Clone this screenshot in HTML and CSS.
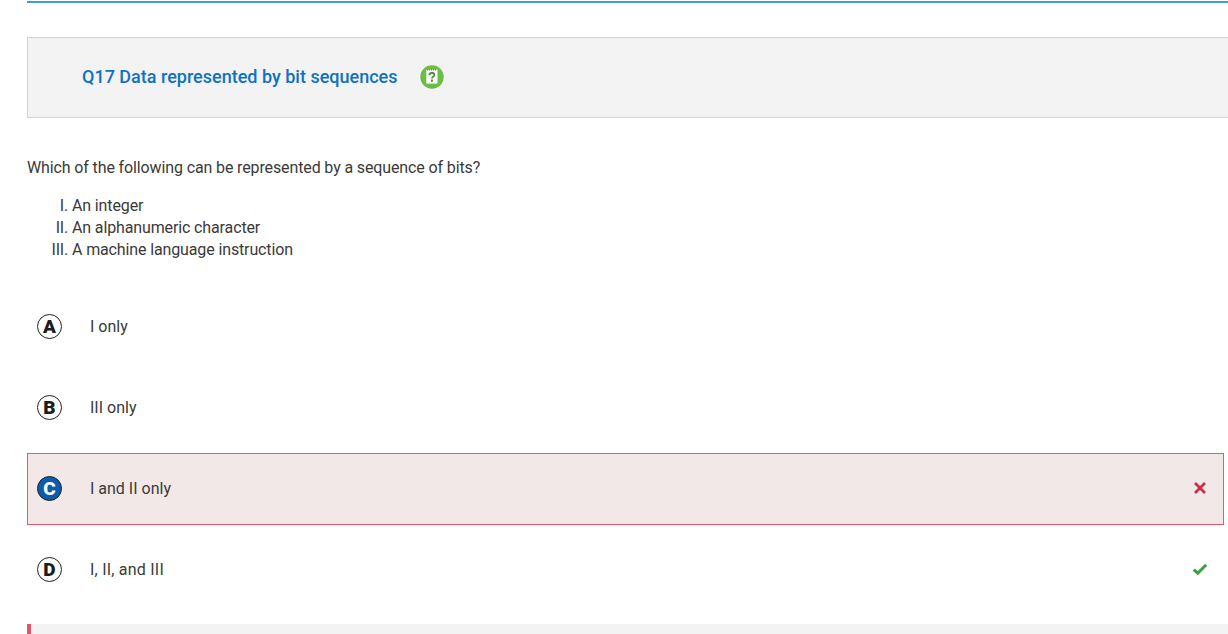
FILE: index.html
```html
<!DOCTYPE html>
<html lang="en">
<head>
<meta charset="utf-8">
<title>Q17</title>
<link rel="stylesheet" href="styles.css">
</head>
<body>
<main class="page">
  <div class="rule"></div>
  <header class="qhead">
    <h1 class="qtitle">Q17 Data represented by bit sequences</h1>
    <svg class="qicon" width="24" height="24" viewBox="0 0 24 24" aria-hidden="true">
      <circle cx="12" cy="12" r="11.7" fill="#6cbd45"/>
      <rect x="6.3" y="4.6" width="11.2" height="14" fill="#fff"/>
      <path d="M7.5 3.8v1.8M9.5 3.8v1.8M11.5 3.8v1.8M13.5 3.8v1.8M15.5 3.8v1.8" stroke="#3f8f2a" stroke-width=".8"/>
      <path d="M9.4 10.2c0-3.2 5-3.2 5-.2 0 1.8-2.5 1.9-2.5 3.5" fill="none" stroke="#3f8f2a" stroke-width="1.8"/>
      <rect x="10.9" y="14.6" width="2" height="2.1" fill="#3f8f2a"/>
    </svg>
  </header>
  <p class="stem">Which of the following can be represented by a sequence of bits?</p>
  <ol class="roman">
    <li>An integer</li>
    <li>An alphanumeric character</li>
    <li>A machine language instruction</li>
  </ol>
  <div class="choices">
    <div class="choice"><span class="letter">A</span><span class="label">I only</span></div>
    <div class="choice"><span class="letter">B</span><span class="label">III only</span></div>
    <div class="choice wrong"><span class="letter">C</span><span class="label">I and II only</span>
      <svg class="mark" width="14" height="14" viewBox="0 0 14 14" aria-hidden="true"><path d="M2 2l10 10M12 2L2 12" stroke="#c9314a" stroke-width="2.8" fill="none"/></svg>
    </div>
    <div class="choice"><span class="letter">D</span><span class="label wide">I, II, and III</span>
      <svg class="mark" width="14" height="14" viewBox="0 0 14 14" aria-hidden="true"><path d="M.8 7.6l4 3.6 8.4-8.4" stroke="#3c9f45" stroke-width="3" fill="none"/></svg>
    </div>
  </div>
  <div class="feedback"></div>
</main>
</body>
</html>
```
FILE: styles.css
```css
html, body { margin: 0; padding: 0; background: #fff; overflow: hidden; height: 634px; }
body { font-family: Roboto, "Liberation Sans", sans-serif; font-size: 16px; color: #3a3a3a; }
.page { padding: 1px 0 0 27px; }
.rule { height: 2px; background: #3d9bd9; }
.qhead {
  margin-top: 34px; height: 79px; box-sizing: content-box; display: flex; align-items: center; gap: 23px;
  padding-left: 54px; background: #f3f3f3;
  border: 1px solid #d2d2d2; border-right: 0;
}
.qtitle { margin: 0 0 2px; font-size: 18px; font-weight: 500; line-height: 24px; color: #0f72c0; }
.qicon { display: block; margin-bottom: 2px; }
.stem { margin: 39px 0 0; line-height: 22px; letter-spacing: -0.125px; }
.roman { margin: 16px 0 0; padding-left: 45px; list-style: upper-roman; line-height: 22px; letter-spacing: -0.13px; }
.choices { margin-top: 30px; width: 1197px; display: flex; flex-direction: column; gap: 10px; }
.choice {
  box-sizing: border-box; height: 71px; display: flex; align-items: center;
  padding-left: 9px; border: 1px solid transparent;
}
.letter {
  box-sizing: border-box; width: 25px; height: 25px; flex: none; border-radius: 50%;
  border: 1px solid #222; display: flex; align-items: center; justify-content: center;
  font-size: 19px; font-weight: 900; color: #1c1c1c; line-height: 1;
}
.label { margin-left: 28px; flex: 1; }
.wide { letter-spacing: 0.22px; }
.mark { margin-right: 16px; margin-top: -1px; }
.choice.wrong { height: 72px; margin-bottom: -1px; padding-bottom: 1px; background: #f3e8e8; border: 1px solid #e35a6b; }
.wrong .letter { background: #0b5cab; color: #fff; }
.feedback { margin-top: 19px; height: 20px; background: #f3f3f3; border-left: 4px solid #e2566a; }
```
